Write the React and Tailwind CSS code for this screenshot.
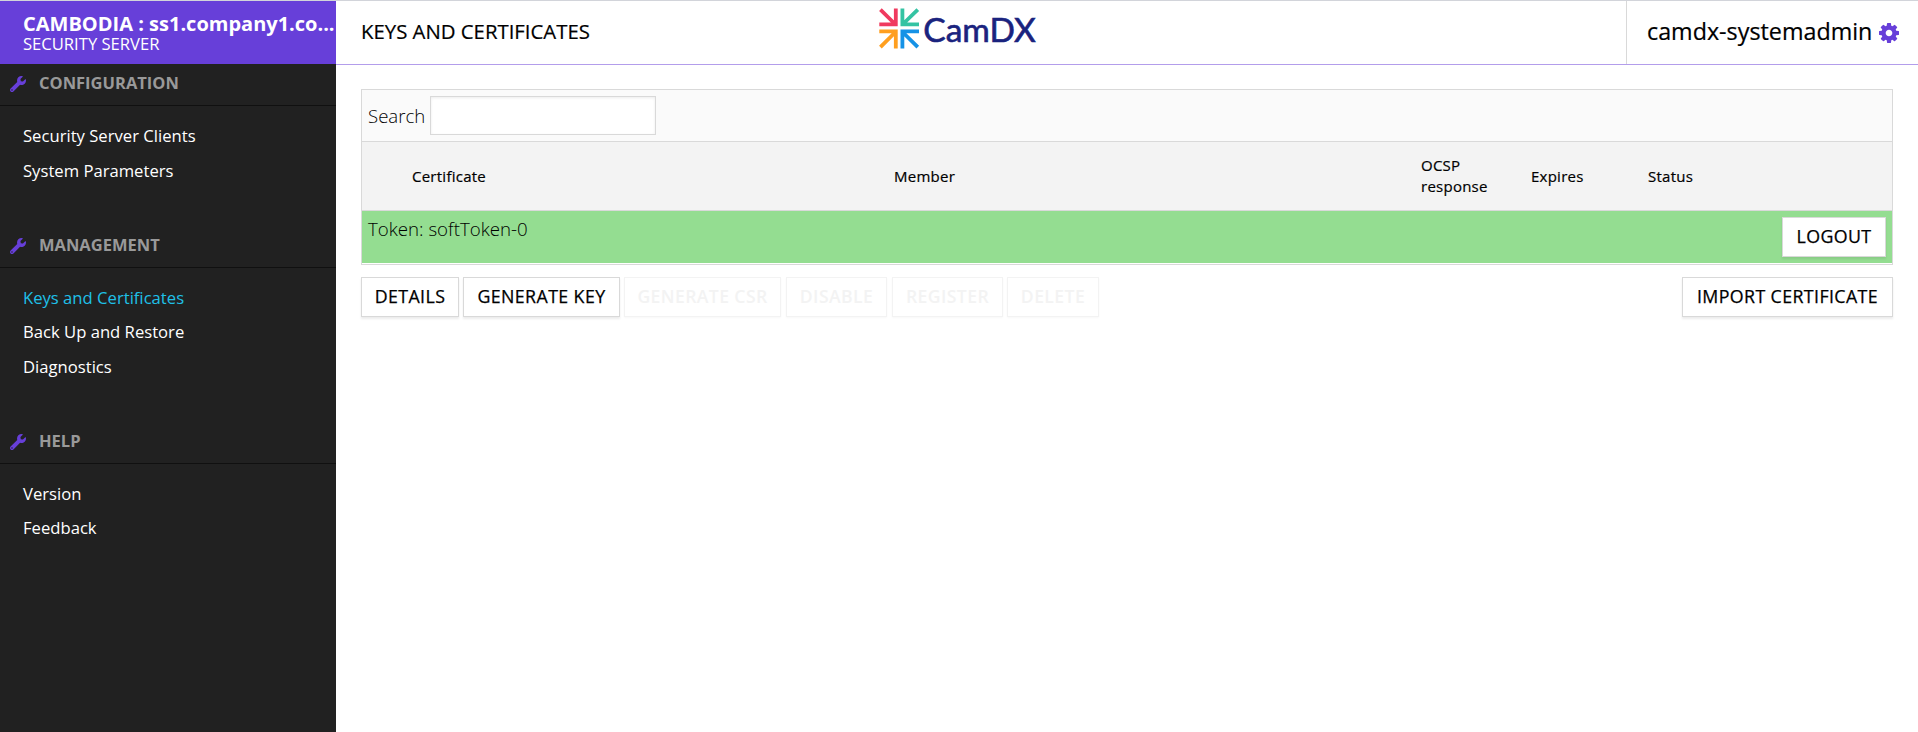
import React from "react";
import { FaWrench } from "react-icons/fa";

const sections = [
  { title: "CONFIGURATION", items: ["Security Server Clients", "System Parameters"] },
  { title: "MANAGEMENT", items: ["Keys and Certificates", "Back Up and Restore", "Diagnostics"] },
  { title: "HELP", items: ["Version", "Feedback"] },
];

function Button({ children, className = "", disabled = false }) {
  const tone = disabled
    ? "border-[#f3f3f3] text-[17.6px] text-[#f3f3f3] font-semibold shadow-[0_1px_2px_rgba(0,0,0,0.03)]"
    : "border-[#d9d9d9] text-[17.8px] text-black font-normal [-webkit-text-stroke:0.25px_black] shadow-[0_2px_2px_rgba(0,0,0,0.08)]";
  return (
    <button className={`flex h-10 shrink-0 items-center justify-center whitespace-nowrap border bg-white pb-px tracking-[0.4px] ${tone} ${className}`}>
      {children}
    </button>
  );
}

function Gear() {
  return (
    <svg className="ml-[7px] size-5 fill-[#673fd9]" viewBox="0 128 1536 1536">
      <path d="M1024 896q0-106-75-181t-181-75-181 75-75 181 75 181 181 75 181-75 75-181zm512-109v222q0 12-8 23t-20 13l-185 28q-19 54-39 91 35 50 107 138 10 12 10 25t-9 23q-27 37-99 108t-94 71q-12 0-26-9l-138-108q-44 23-91 38-16 136-29 186-7 28-36 28h-222q-14 0-24.5-8.5t-11.5-21.5l-28-184q-49-16-90-37l-141 107q-10 9-25 9-14 0-25-11-126-114-165-168-7-10-7-23 0-12 8-23 15-21 51-66.5t54-70.5q-27-50-41-99l-183-27q-13-2-21-12.5t-8-23.5v-222q0-12 8-23t19-13l186-28q14-46 39-92-40-57-107-138-10-12-10-24 0-10 9-23 26-36 98.5-107.5t94.5-71.5q13 0 26 10l138 107q44-23 91-38 16-136 29-186 7-28 36-28h222q14 0 24.5 8.5t11.5 21.5l28 184q49 16 90 37l142-107q9-9 24-9 13 0 25 10 129 119 165 170 7 8 7 22 0 12-8 23-15 21-51 66.5t-54 70.5q26 50 41 98l183 28q13 2 21 12.5t8 23.5z" />
    </svg>
  );
}

function Logo() {
  return (
    <svg className="h-[50px] w-[170px]" viewBox="0 0 170 50" fill="none" strokeWidth="3.8">
      <g stroke="#f03a5f"><path d="M1.4 8.7L16 23M16.8 7.4V25.2M18.7 23.3H0.3" /></g>
      <g stroke="#34c3a3"><path d="M38.8 8.7L24 23M23.4 7.4V25.2M21.5 23.3H40" /></g>
      <g stroke="#ff9f1f"><path d="M1.4 46.2L16 31.5M16.8 47.5V28.5M18.7 30.4H0.3" /></g>
      <g stroke="#1592e6"><path d="M38.8 46.2L24 31.5M23.4 47.5V28.5M21.5 30.4H40" /></g>
      <text x="44.3" y="41" fill="#1a237e" stroke="#1a237e" strokeWidth="0.6" textLength="112.5" lengthAdjust="spacingAndGlyphs" className="font-['Lato'] text-[32px]">CamDX</text>
    </svg>
  );
}

export default function App() {
  return (
    <div className="flex h-[732px] w-[1918px] flex-col overflow-hidden border-t border-[#d2d4da] bg-white font-['Open_Sans','Noto_Sans',sans-serif] text-black">
      <div className="flex min-h-0 flex-1">
        <aside className="w-[336px] shrink-0 bg-[#212121]">
          <div className="h-[63px] bg-[#673fd9] pl-[23px] pt-[11px] text-white">
            <div className="whitespace-nowrap text-[20px] font-bold leading-[24px]">CAMBODIA : ss1.company1.co...</div>
            <div className="text-[16.6px] leading-[16px]">SECURITY SERVER</div>
          </div>
          {sections.map((s) => (
            <section key={s.title} className="pb-[37.5px]">
              <h2 className="flex h-[42px] items-center border-b border-[#101010] pb-[2px] pl-[10px] text-[16.5px] font-bold text-[#999]">
                <FaWrench className="mr-[13px] mt-px size-4 text-[#673fd9]" />
                {s.title}
              </h2>
              <ul className="pt-[13px]">
                {s.items.map((i) => (
                  <li key={i} className={`h-[34.5px] pl-[23px] text-[16.65px] leading-[34.5px] ${i === "Keys and Certificates" ? "text-[#1fc0e8]" : "text-white"}`}>{i}</li>
                ))}
              </ul>
            </section>
          ))}
        </aside>
        <main className="flex min-w-0 flex-1 flex-col">
          <header className="flex h-16 shrink-0 border-b border-[#b39deb]">
            <h1 className="w-[543px] pl-[25px] text-[20.35px] leading-[61px] [-webkit-text-stroke:0.2px_black]">KEYS AND CERTIFICATES</h1>
            <Logo />
            <div className="ml-auto flex w-[292px] items-center border-l border-[#d9d9d9] pl-[20px] text-[23.3px] [-webkit-text-stroke:0.2px_black]">
              <span className="-mt-[2px]">camdx-systemadmin</span>
              <Gear />
            </div>
          </header>
          <div className="pl-[25px] pr-[25px] pt-6">
            <div className="h-44 border border-[#d9d9d9]">
              <div className="flex h-[52px] items-center border-b border-[#d9d9d9] bg-[#fafafa] pl-[6px] text-[18.6px] font-light">
                <label className="w-[62px] pt-px">Search</label>
                <input className="h-[39px] w-[226px] border border-[#d9d9d9] bg-white shadow-[inset_0_1px_3px_rgba(0,0,0,0.08)]" />
              </div>
              <div className="flex h-[69px] items-center border-b border-[#d9d9d9] bg-[#f3f3f3] pl-[50px] text-[15px] leading-[21px] tracking-[0.25px] [-webkit-text-stroke:0.2px_black]">
                <div className="w-[482px]">Certificate</div>
                <div className="w-[527px]">Member</div>
                <div className="w-[110px]">OCSP<br />response</div>
                <div className="w-[117px]">Expires</div>
                <div>Status</div>
              </div>
              <div className="flex h-[52px] items-start justify-between bg-[#94dd91] pl-[6px] pr-[6px] pt-[6px] text-[18.7px] font-light">
                <span className="leading-[24px]">Token: softToken-0</span>
                <Button className="w-[104px]">LOGOUT</Button>
              </div>
            </div>
            <div className="mt-3 flex">
              <Button className="mr-1 w-[98px]">DETAILS</Button>
              <Button className="mr-1 w-[157px]">GENERATE KEY</Button>
              <Button disabled className="mr-[5px] w-[157px]">GENERATE CSR</Button>
              <Button disabled className="mr-[5px] w-[101px]">DISABLE</Button>
              <Button disabled className="mr-1 w-[111px]">REGISTER</Button>
              <Button disabled className="w-[92px]">DELETE</Button>
              <Button className="ml-auto w-[211px]">IMPORT CERTIFICATE</Button>
            </div>
          </div>
        </main>
      </div>
    </div>
  );
}
